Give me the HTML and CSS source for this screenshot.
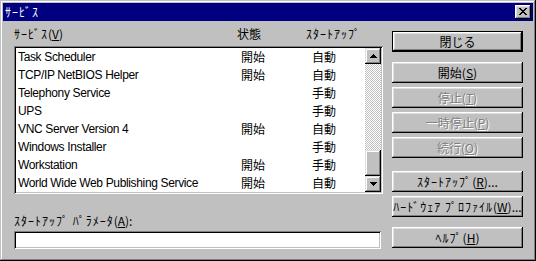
FILE: index.html
```html
<!DOCTYPE html>
<html lang="ja">
<head>
  <meta charset="UTF-8">
  <title>ｻｰﾋﾞｽ</title>
  <link rel="stylesheet" href="styles.css">
</head>
<body>

  <div class="window">
    <div class="titlebar">
      <span class="title hk">ｻｰﾋﾞｽ</span>
      <span class="close">
        <svg width="8" height="7" viewBox="0 0 8 7"><path d="M0 0h2v1h1v1h2v-1h1v-1h2v1h-1v1h-1v1h-1v1h1v1h1v1h1v1h-2v-1h-1v-1h-2v1h-1v1h-2v-1h1v-1h1v-1h1v-1h-1v-1h-1v-1h-1z" fill="#000"/></svg>
      </span>
    </div>

    <div class="body">
      <div class="left">
        <div class="cols head">
          <span><span class="hk">ｻｰﾋﾞｽ</span>(<u>V</u>)</span>
          <span>状態</span>
          <span class="hk">ｽﾀｰﾄｱｯﾌﾟ</span>
        </div>

        <div class="listbox">
          <div class="rows">
            <div class="cols row"><span class="name">Task Scheduler</span><span>開始</span><span>自動</span></div>
            <div class="cols row"><span class="name">TCP/IP NetBIOS Helper</span><span>開始</span><span>自動</span></div>
            <div class="cols row"><span class="name">Telephony Service</span><span></span><span>手動</span></div>
            <div class="cols row"><span class="name">UPS</span><span></span><span>手動</span></div>
            <div class="cols row"><span class="name">VNC Server Version 4</span><span>開始</span><span>自動</span></div>
            <div class="cols row"><span class="name">Windows Installer</span><span></span><span>手動</span></div>
            <div class="cols row"><span class="name">Workstation</span><span>開始</span><span>手動</span></div>
            <div class="cols row"><span class="name">World Wide Web Publishing Service</span><span>開始</span><span>自動</span></div>
          </div>
          <div class="scrollbar">
            <span class="arrow">
              <svg width="7" height="4" viewBox="0 0 7 4"><path d="M3 0h1v1h1v1h1v1h1v1h-7v-1h1v-1h1v-1h1z" fill="#000"/></svg>
            </span>
            <span class="track"></span>
            <span class="thumb"></span>
            <span class="arrow">
              <svg width="7" height="4" viewBox="0 0 7 4"><path d="M0 0h7v1h-1v1h-1v1h-1v1h-1v-1h-1v-1h-1v-1h-1z" fill="#000"/></svg>
            </span>
          </div>
        </div>

        <div class="param-label"><span class="hk">ｽﾀｰﾄｱｯﾌﾟ ﾊﾟﾗﾒｰﾀ</span>(<u>A</u>):</div>
        <div class="param-input"></div>
      </div>

      <div class="right">
        <button class="btn default">閉じる</button>
        <button class="btn gap">開始(<u>S</u>)</button>
        <button class="btn off">停止(<u>T</u>)</button>
        <button class="btn off">一時停止(<u>P</u>)</button>
        <button class="btn off">続行(<u>O</u>)</button>
        <button class="btn gap2"><span class="hk">ｽﾀｰﾄｱｯﾌﾟ</span>(<u>R</u>)...</button>
        <button class="btn"><span class="hk">ﾊｰﾄﾞｳｪｱ ﾌﾟﾛﾌｧｲﾙ</span>(<u>W</u>)...</button>
        <button class="btn gap"><span class="hk">ﾍﾙﾌﾟ</span>(<u>H</u>)</button>
      </div>
    </div>
  </div>

</body>
</html>
```

FILE: styles.css
```css
body {
  margin: 0;
  background-color: #c0c0c0;
  font-family: "Noto Sans CJK JP", "Liberation Sans", sans-serif;
  font-size: 12px;
  color: #000;
}
.window {
  width: 536px;
  height: 261px;
  box-sizing: border-box;
  padding: 3px;
  background-color: #c0c0c0;
  box-shadow: inset -1px -1px #000, inset 1px 1px #c0c0c0,
              inset -2px -2px #808080, inset 2px 2px #fff;
}
/* half-width katakana runs a bit wider in the original */
.hk {
  letter-spacing: 1px;
}
.titlebar {
  height: 18px;
  background-color: #000080;
  color: #fff;
  display: flex;
  align-items: center;
  justify-content: space-between;
  padding: 0 2px;
}
.title {
  line-height: 14px;
}
.close {
  width: 16px;
  height: 14px;
  box-sizing: border-box;
  background-color: #c0c0c0;
  display: flex;
  align-items: center;
  justify-content: center;
  padding-bottom: 1px;
  box-shadow: inset -1px -1px #000, inset 1px 1px #fff,
              inset -2px -2px #808080, inset 2px 2px #dfdfdf;
}
.body {
  display: flex;
  gap: 9px;
  padding-left: 11px;
}
.left {
  width: 369px;
}
.cols {
  display: grid;
  grid-template-columns: 223px 71px 1fr;
  line-height: 14px;
  white-space: nowrap;
}
.head {
  margin-top: 6px;
  margin-bottom: 5px;
  grid-template-columns: 223px 69px 1fr;
}
.listbox {
  height: 148px;
  box-sizing: border-box;
  padding: 2px;
  display: flex;
  background-color: #fff;
  box-shadow: inset 1px 1px #808080, inset -1px -1px #fff,
              inset 2px 2px #000, inset -2px -2px #c0c0c0;
}
.rows {
  flex: 1;
}
.row {
  height: 18px;
  align-items: center;
  padding-left: 2px;
}
.name {
  font-family: "Liberation Sans", sans-serif;
  font-size: 12px;
  letter-spacing: -0.35px;
}
.scrollbar {
  width: 16px;
  display: flex;
  flex-direction: column;
}
.arrow, .thumb {
  height: 16px;
  flex: none;
  display: flex;
  align-items: center;
  justify-content: center;
  background-color: #c0c0c0;
  box-shadow: inset -1px -1px #000, inset 1px 1px #dfdfdf,
              inset -2px -2px #808080, inset 2px 2px #fff;
}
.thumb {
  height: 26px;
}
.track {
  flex: 1;
  background-image: repeating-conic-gradient(#c0c0c0 0 25%, #fff 0 50%);
  background-size: 2px 2px;
}
.param-label {
  margin-top: 20px;
  margin-bottom: 3px;
  line-height: 14px;
}
.param-input {
  width: 367px;
  height: 18px;
  background-color: #fff;
  box-shadow: inset 1px 1px #808080, inset -1px -1px #fff,
              inset 2px 2px #000, inset -2px -2px #c0c0c0;
}
.right {
  width: 131px;
  padding-top: 10px;
  display: flex;
  flex-direction: column;
  gap: 4px;
}
.btn {
  height: 21px;
  padding: 0;
  border: none;
  font: inherit;
  line-height: 14px;
  color: #000;
  background-color: #c0c0c0;
  box-shadow: inset -1px -1px #000, inset 1px 1px #fff,
              inset -2px -2px #808080, inset 2px 2px #dfdfdf;
}
.btn.default {
  box-shadow: inset 0 0 0 1px #000, inset -2px -2px #000, inset 2px 2px #fff,
              inset -3px -3px #808080, inset 3px 3px #dfdfdf;
}
.btn.off {
  color: #808080;
  text-shadow: 1px 1px 0 #fff;
}
.btn.gap {
  margin-top: 6px;
}
.btn.gap2 {
  margin-top: 9px;
}
```
